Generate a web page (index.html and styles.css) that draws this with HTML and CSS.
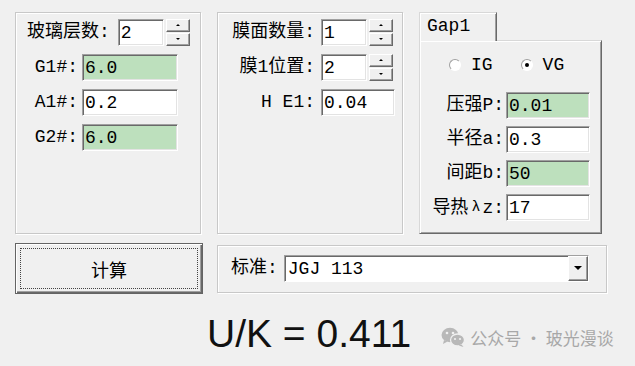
FILE: index.html
```html
<!DOCTYPE html>
<html lang="zh">
<head>
  <meta charset="UTF-8">
  <title>U值计算</title>
  <link rel="stylesheet" href="styles.css">
</head>
<body>
  <div class="window">
    <div class="top">
      <div class="group glass">
        <div class="row">
          <label class="lbl first">玻璃层数:</label>
          <input class="box short" value="2">
          <div class="spin"><span class="up"></span><span class="down"></span></div>
        </div>
        <div class="row">
          <label class="lbl g1">G1#:</label>
          <input class="box wide green" value="6.0">
        </div>
        <div class="row">
          <label class="lbl g1">A1#:</label>
          <input class="box wide" value="0.2">
        </div>
        <div class="row">
          <label class="lbl g1">G2#:</label>
          <input class="box wide green" value="6.0">
        </div>
      </div>

      <div class="group film">
        <div class="row">
          <label class="lbl g2">膜面数量:</label>
          <input class="box short" value="1">
          <div class="spin"><span class="up"></span><span class="down"></span></div>
        </div>
        <div class="row">
          <label class="lbl g2">膜1位置:</label>
          <input class="box short" value="2">
          <div class="spin"><span class="up"></span><span class="down"></span></div>
        </div>
        <div class="row">
          <label class="lbl g2">H E1:</label>
          <input class="box mid" value="0.04">
        </div>
      </div>

      <div class="tabs">
        <div class="tab">Gap1</div>
        <div class="panel">
          <div class="radios">
            <label class="radio"><span class="dot"></span>IG</label>
            <label class="radio"><span class="dot checked"></span>VG</label>
          </div>
          <div class="fields">
            <div class="row">
              <label class="lbl g3">压强P:</label>
              <input class="box gap green" value="0.01">
            </div>
            <div class="row">
              <label class="lbl g3">半径a:</label>
              <input class="box gap" value="0.3">
            </div>
            <div class="row">
              <label class="lbl g3">间距b:</label>
              <input class="box gap green" value="50">
            </div>
            <div class="row">
              <label class="lbl g3">导热<span class="lambda">λ</span>z:</label>
              <input class="box gap" value="17">
            </div>
          </div>
        </div>
      </div>
    </div>

    <div class="bottom">
      <button class="calc">计算</button>
      <div class="group standard">
        <label class="lbl">标准:</label>
        <div class="combo">
          <span class="combo-text">JGJ 113</span>
          <span class="drop"></span>
        </div>
      </div>
    </div>

    <div class="result">
      <span class="uk">U/K = 0.411</span>
      <span class="mark">
        <svg width="24" height="20" viewBox="0 0 24 20">
          <ellipse cx="9" cy="8" rx="8.5" ry="7.2" fill="#b8b8b8"/>
          <path d="M3 13 L2 17 L6.5 14.5 Z" fill="#b8b8b8"/>
          <circle cx="6" cy="6" r="1.3" fill="#f0f0f0"/>
          <circle cx="12" cy="6" r="1.3" fill="#f0f0f0"/>
          <ellipse cx="16.5" cy="13" rx="7" ry="6" fill="#b8b8b8" stroke="#f0f0f0" stroke-width="1.3"/>
          <path d="M20.5 17.5 L22.5 20 L17.5 18.5 Z" fill="#b8b8b8"/>
          <circle cx="14" cy="12" r="1.1" fill="#f0f0f0"/>
          <circle cx="19" cy="12" r="1.1" fill="#f0f0f0"/>
        </svg>
        公众号 · 玻光漫谈
      </span>
    </div>
  </div>
</body>
</html>
```

FILE: styles.css
```css
body {
  margin: 0;
  background-color: #f0f0f0;
  font-family: "Liberation Mono", "Noto Sans CJK SC", monospace;
  font-size: 18px;
  color: #000;
}
.window {
  width: 635px;
  height: 366px;
  padding: 12px 0 0 15px;
  box-sizing: border-box;
}
.top {
  display: flex;
  gap: 16px;
  height: 222px;
}
.group {
  border: 1px solid #c8c8c8;
  box-shadow: inset 1px 1px 0 #fff, 1px 1px 0 #fff;
  box-sizing: border-box;
}
.glass {
  width: 186px;
  padding: 6px 0 0 11px;
  display: flex;
  flex-direction: column;
  gap: 8px;
}
.film {
  width: 186px;
  padding: 6px 0 0 12px;
  display: flex;
  flex-direction: column;
  gap: 8px;
}
.row {
  display: flex;
  align-items: center;
  height: 27px;
}
.lbl {
  white-space: nowrap;
  line-height: 27px;
}
.first {
  margin-right: 8px;
}
.g1 {
  width: 51px;
  text-align: right;
  margin-right: 4px;
}
.g2 {
  width: 85px;
  text-align: right;
  margin-right: 6px;
}
.g3 {
  width: 77px;
  text-align: right;
  margin-right: 2px;
}
.lambda {
  font-size: 15px;
  margin: 0 2px 0 3px;
  vertical-align: 2px;
}
.box {
  height: 27px;
  box-sizing: border-box;
  font: inherit;
  padding: 0 2px;
  margin: 0;
  border: 1px solid;
  border-color: #a0a0a0 #fff #fff #a0a0a0;
  box-shadow: inset 1px 1px 0 #696969, inset -1px -1px 0 #e3e3e3;
  background-color: #fff;
  outline: none;
}
.green {
  background-color: #bde0bd;
}
.short {
  width: 46px;
}
.wide {
  width: 96px;
}
.mid {
  width: 74px;
}
.gap {
  width: 84px;
}
.spin {
  display: flex;
  flex-direction: column;
  gap: 1px;
  margin-left: 2px;
  width: 24px;
}
.spin span {
  position: relative;
  height: 13px;
  box-sizing: border-box;
  border: 1px solid;
  border-color: #fff #696969 #696969 #fff;
  box-shadow: inset -1px -1px 0 #a0a0a0;
  background-color: #f0f0f0;
}
.spin span::after {
  content: "";
  position: absolute;
  left: 9px;
  top: 4px;
  border-left: 2px solid transparent;
  border-right: 2px solid transparent;
}
.spin .up::after {
  border-bottom: 2px solid #000;
}
.spin .down::after {
  border-top: 2px solid #000;
}
.tabs {
  width: 183px;
  display: flex;
  flex-direction: column;
}
.tab {
  width: 78px;
  height: 29px;
  box-sizing: border-box;
  margin-bottom: -1px;
  padding: 3px 0 0 7px;
  border: 1px solid;
  border-bottom: none;
  border-color: #d8d8d8 #696969 transparent #d8d8d8;
  box-shadow: inset 1px 1px 0 #fff, inset -1px 0 0 #a0a0a0;
  background-color: #f0f0f0;
  position: relative;
  z-index: 1;
}
.panel {
  height: 194px;
  box-sizing: border-box;
  border: 1px solid;
  border-color: #d8d8d8 #696969 #696969 #d8d8d8;
  box-shadow: inset 1px 1px 0 #fff, inset -1px -1px 0 #a0a0a0;
  padding: 12px 0 0 7px;
}
.radios {
  display: flex;
  align-items: center;
  height: 24px;
  padding-left: 22px;
  gap: 28px;
}
.radio {
  display: flex;
  align-items: center;
  gap: 10px;
}
.dot {
  position: relative;
  width: 12px;
  height: 12px;
  box-sizing: border-box;
  border-radius: 50%;
  border: 1px solid;
  border-color: #a0a0a0 #fff #fff #a0a0a0;
  background-color: #fff;
}
.checked::after {
  content: "";
  position: absolute;
  left: 3px;
  top: 3px;
  width: 4px;
  height: 4px;
  border-radius: 50%;
  background-color: #000;
}
.fields {
  margin-top: 15px;
  display: flex;
  flex-direction: column;
  gap: 7px;
}
.bottom {
  display: flex;
  align-items: center;
  gap: 14px;
  margin-top: 9px;
}
.calc {
  width: 188px;
  height: 51px;
  font: inherit;
  background-color: #f0f0f0;
  border: 1px solid #646464;
  box-shadow: inset 1px 1px 0 #fff, inset -1px -1px 0 #696969, inset -2px -2px 0 #a0a0a0;
  outline: 1px dotted #444;
  outline-offset: -6px;
  padding: 0;
}
.standard {
  width: 390px;
  height: 48px;
  display: flex;
  align-items: center;
  padding-left: 13px;
}
.combo {
  display: flex;
  align-items: center;
  justify-content: space-between;
  width: 305px;
  height: 27px;
  margin-left: 6px;
  box-sizing: border-box;
  border: 1px solid;
  border-color: #a0a0a0 #fff #fff #a0a0a0;
  box-shadow: inset 1px 1px 0 #696969;
  background-color: #fff;
  padding-left: 3px;
}
.drop {
  position: relative;
  width: 20px;
  height: 25px;
  box-sizing: border-box;
  border: 1px solid;
  border-color: #fff #696969 #696969 #fff;
  box-shadow: inset -1px -1px 0 #a0a0a0;
  background-color: #f0f0f0;
}
.drop::after {
  content: "";
  position: absolute;
  left: 5px;
  top: 9px;
  border-left: 4px solid transparent;
  border-right: 4px solid transparent;
  border-top: 4px solid #000;
}
.result {
  display: flex;
  align-items: baseline;
  margin-top: 20px;
  padding-left: 192px;
}
.uk {
  font-family: "Liberation Sans", Arial, sans-serif;
  font-size: 39px;
  line-height: 40px;
  color: #111;
}
.mark {
  margin-left: 30px;
  font-family: "Noto Sans CJK SC", sans-serif;
  font-size: 17px;
  color: #a8a8a8;
  display: flex;
  align-items: center;
  gap: 5px;
}
```
